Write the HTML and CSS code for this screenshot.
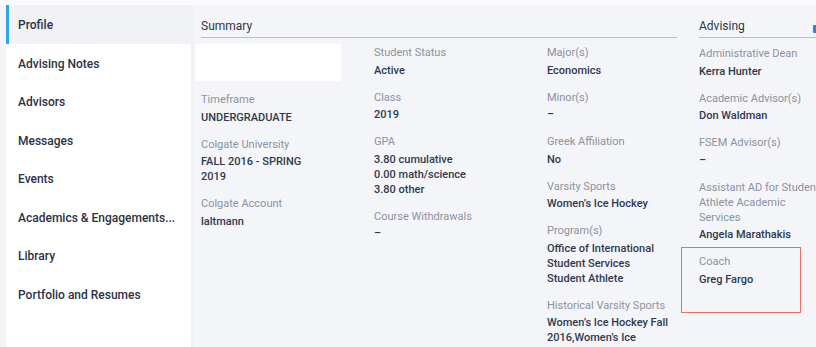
FILE: index.html
```html
<!DOCTYPE html>
<html lang="en">
<head>
    <meta charset="UTF-8">
    <meta name="viewport" content="width=device-width, initial-scale=1.0">
    <title>Student Profile</title>
    <link rel="stylesheet" href="styles.css">
</head>

<body>
    <div class="topbar"></div>

    <div class="layout">
        <!-- Боковое меню -->
        <nav class="sidebar">
            <a class="nav-item active">Profile</a>
            <a class="nav-item">Advising Notes</a>
            <a class="nav-item">Advisors</a>
            <a class="nav-item">Messages</a>
            <a class="nav-item">Events</a>
            <a class="nav-item">Academics &amp; Engagements...</a>
            <a class="nav-item">Library</a>
            <a class="nav-item">Portfolio and Resumes</a>
        </nav>

        <main class="content">
            <section class="summary">
                <h2 class="section-title">Summary</h2>
                <div class="summary-grid">
                    <div class="col col-first">
                        <div class="photo"></div>
                        <div class="field">
                            <div class="label">Timeframe</div>
                            <div class="value">UNDERGRADUATE</div>
                        </div>
                        <div class="field">
                            <div class="label">Colgate University</div>
                            <div class="value">FALL 2016 - SPRING 2019</div>
                        </div>
                        <div class="field">
                            <div class="label">Colgate Account</div>
                            <div class="value">laltmann</div>
                        </div>
                    </div>

                    <div class="col">
                        <div class="field">
                            <div class="label">Student Status</div>
                            <div class="value">Active</div>
                        </div>
                        <div class="field">
                            <div class="label">Class</div>
                            <div class="value">2019</div>
                        </div>
                        <div class="field">
                            <div class="label">GPA</div>
                            <div class="value">3.80 cumulative<br>0.00 math/science<br>3.80 other</div>
                        </div>
                        <div class="field">
                            <div class="label">Course Withdrawals</div>
                            <div class="value">–</div>
                        </div>
                    </div>

                    <div class="col col-narrow">
                        <div class="field">
                            <div class="label">Major(s)</div>
                            <div class="value">Economics</div>
                        </div>
                        <div class="field">
                            <div class="label">Minor(s)</div>
                            <div class="value">–</div>
                        </div>
                        <div class="field">
                            <div class="label">Greek Affiliation</div>
                            <div class="value">No</div>
                        </div>
                        <div class="field">
                            <div class="label">Varsity Sports</div>
                            <div class="value">Women’s Ice Hockey</div>
                        </div>
                        <div class="field">
                            <div class="label">Program(s)</div>
                            <div class="value">Office of International Student Services<br>Student Athlete</div>
                        </div>
                        <div class="field">
                            <div class="label">Historical Varsity Sports</div>
                            <div class="value">Women’s Ice Hockey Fall 2016,Women’s Ice Hockey Spring 2017</div>
                        </div>
                    </div>
                </div>
            </section>

            <!-- Советники -->
            <section class="advising">
                <h2 class="section-title">Advising <span class="edit-icon"></span></h2>
                <div class="col col-advising">
                    <div class="field">
                        <div class="label">Administrative Dean</div>
                        <div class="value">Kerra Hunter</div>
                    </div>
                    <div class="field">
                        <div class="label">Academic Advisor(s)</div>
                        <div class="value">Don Waldman</div>
                    </div>
                    <div class="field">
                        <div class="label">FSEM Advisor(s)</div>
                        <div class="value">–</div>
                    </div>
                    <div class="field">
                        <div class="label">Assistant AD for Student-Athlete Academic Services</div>
                        <div class="value">Angela Marathakis</div>
                    </div>
                    <div class="field highlighted">
                        <div class="label">Coach</div>
                        <div class="value">Greg Fargo</div>
                    </div>
                </div>
            </section>
        </main>
    </div>
</body>
</html>
```

FILE: styles.css
```css
body {
    font-family: Roboto, "Liberation Sans", sans-serif;
    margin: 0;
    padding: 0;
    width: 816px;
    height: 347px;
    overflow: hidden;
    background-color: #f4f5f8;
    color: #2c364a;
}

.topbar {
    height: 5px;
    background-color: #fbfbfc;
}

.layout {
    display: flex;
    width: 900px;
}

/* Меню */
.sidebar {
    width: 185px;
    margin-left: 6px;
    padding-bottom: 20px;
    background-color: #fff;
    display: flex;
    flex-direction: column;
    flex-shrink: 0;
}

.nav-item {
    box-sizing: border-box;
    height: 38.5px;
    padding: 2px 0 0 12px;
    line-height: 36px;
    font-size: 12px;
    font-weight: 500;
    color: #2b3244;
    cursor: pointer;
}

.nav-item.active {
    background-color: #f1f2f5;
    border-left: 3px solid #2aa7e6;
    padding-left: 9px;
}

.content {
    display: flex;
    border-left: 2px solid #eef0f3;
}

.section-title {
    margin: 0 6px;
    padding: 13px 0 3px;
    font-size: 12px;
    line-height: 16px;
    font-weight: 400;
    color: #2e3749;
    border-bottom: 1px solid #b9bec8;
    display: flex;
    align-items: flex-start;
}

/* Сводка */
.summary {
    width: 488px;
    margin-left: 2px;
    flex-shrink: 0;
}

.summary-grid {
    display: grid;
    grid-template-columns: 179px 173px 125px;
    margin-top: 6px;
}

.col {
    padding-top: 1px;
}

.col-first {
    padding-top: 0;
}

.col-first .field {
    padding-left: 6px;
    width: 112px;
}

.photo {
    width: 146px;
    height: 37px;
    background-color: #fff;
    margin-bottom: 11px;
}

.field {
    margin-bottom: 12px;
}

.label {
    font-size: 11px;
    line-height: 15px;
    color: #8b92a1;
    margin-bottom: 2.5px;
}

.value {
    font-size: 11px;
    line-height: 15px;
    font-weight: 500;
    color: #2f394e;
}

/* Советники */
.advising {
    width: 140px;
    margin-left: 10px;
    flex-shrink: 0;
}

.edit-icon {
    width: 14px;
    height: 8px;
    margin: 7px 0 0 auto;
    background-color: #2f7fe8;
    border-radius: 1px;
}

.col-advising {
    margin: 7px 6px 0;
    width: 130px;
}

.highlighted {
    position: relative;
}

.highlighted::after {
    content: "";
    position: absolute;
    top: -7px;
    left: -18px;
    width: 118px;
    height: 64px;
    border: 1px solid #ec6e69;
}
```
